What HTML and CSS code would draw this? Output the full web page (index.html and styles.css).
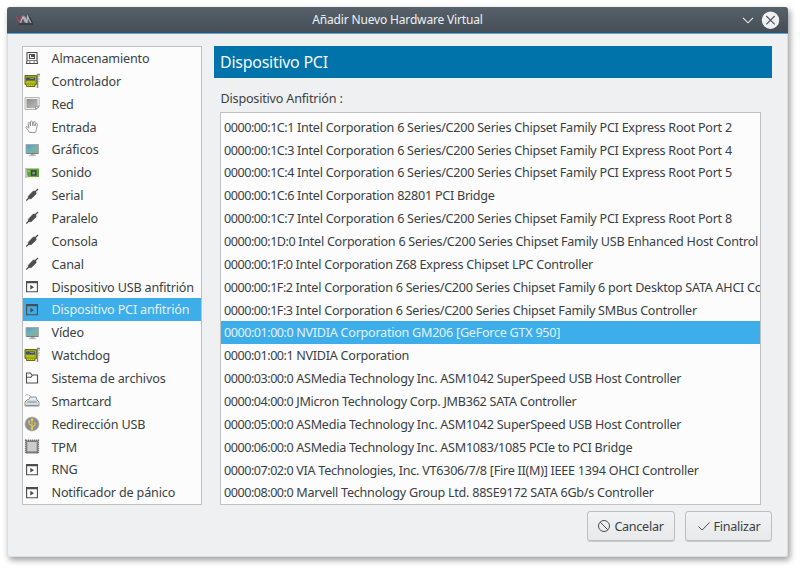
FILE: index.html
```html
<!DOCTYPE html>
<html lang="es">
<head>
<meta charset="utf-8">
<title>Añadir Nuevo Hardware Virtual</title>
<link rel="stylesheet" href="styles.css">
</head>
<body>
<svg class="defs" width="0" height="0">
<defs>
<linearGradient id="screen" x1="0" y1="0" x2="1" y2="1"><stop offset="0" stop-color="#5b93c6"/><stop offset=".5" stop-color="#6bb5b5"/><stop offset="1" stop-color="#a4a878"/></linearGradient>
<linearGradient id="grey" x1="0" y1="0" x2="1" y2="1"><stop offset="0" stop-color="#8c8d8c"/><stop offset="1" stop-color="#bcbdbb"/></linearGradient>
<symbol id="disk" viewBox="0 0 16 16"><path d="M3 2.500h10v8.200l.5 2.800h-11l.5-2.800zM5.500 4.500h5v4h-5z" fill="none" stroke="#4d4d4d" stroke-width="1.100"/><path d="M3 10.500h10" stroke="#4d4d4d" stroke-width=".7"/><path d="M7 5h3v2H7zM5 11.500h1.500v1H5zM9.500 11.500H11v1H9.500z" fill="#4d4d4d"/></symbol>
<symbol id="card" viewBox="0 0 16 16"><path d="M1 2.500h11.500v9h-1.500v2H2.500v-2H1z" fill="#9eaa10" stroke="#686f12"/><path d="M2 4.500h9v3H2z" fill="#46525a"/><path d="M6 5h4v1H6z" fill="#7197b0"/><path d="M2 9h9" stroke="#c7d32b"/><path d="M3 12.500h7" stroke="#d1cf43" stroke-dasharray="1 1"/><path d="M13.500 15V1.500H16" fill="none" stroke="#85898a" stroke-width="1.500"/><path d="M15 2v7" stroke="#adb0af" stroke-dasharray="2 1"/></symbol>
<symbol id="net" viewBox="0 0 16 16"><path d="M1 1.500h14.200v9l-3.200 3H1z" fill="#eee" stroke="#b6b7b5"/><path d="M2.500 3h11v6.500L11 12H2.500z" fill="url(#grey)"/><path d="M11.500 13.500v-3.200h3.700z" fill="#e7e7e5" stroke="#888a85" stroke-width=".8"/></symbol>
<symbol id="hand" viewBox="0 0 16 16"><path d="M5.500 13.500C4.500 11.500 3 10 2 8.800c-.5-1 .8-1.700 1.600-.8L5 9.200 4.200 4.500c-.1-1.200 1.300-1.500 1.700-.4L6.500 7V3c0-1.300 1.800-1.300 1.900 0L8.700 6.800 9.500 3c.2-1 1.800-.8 1.700.4L10.900 7l.9-2.200c.4-1 1.700-.5 1.500.5l-.9 5.200c-.2 1.500-.8 2-1 3z" fill="#fbfbfb" stroke="#858585" stroke-width=".85"/></symbol>
<symbol id="monitor" viewBox="0 0 16 16"><path d="M2 2.500h12.500v9H2z" fill="url(#screen)" stroke="#a5aaa9"/><path d="M2.500 11.500h11.700" stroke="#777e80"/><path d="M6.500 12h4v1.500h-4z" fill="#aaa"/><path d="M5 13.700h7" stroke="#a2a4a5" stroke-width=".8"/></symbol>
<symbol id="sound" viewBox="0 0 16 16"><path d="M2.500 3.500H15v8.500H3.500z" fill="#5fa23e"/><path d="M2 3v10" stroke="#8a9188"/><path d="M3.500 5h2v2h-2z" fill="#a9c85b"/><path d="M3.500 11.800h9" stroke="#b9ac3f" stroke-dasharray="1 1"/><path d="M7 5.200h5.500v5.500H7z" fill="#34413a"/><circle cx="9.700" cy="8" r="1.500" fill="#8e9894"/></symbol>
<symbol id="plug" viewBox="0 0 16 16"><path d="M2.300 13.500L14 2" stroke="#4d4d4d" stroke-width="1.200"/><path d="M4.300 9.300L9.300 4.100 11.500 4.200 12.200 6.700 7.100 11.700l-2.600-.1z" fill="#4d4d4d" stroke="#4d4d4d" stroke-width=".7"/></symbol>
<symbol id="run" viewBox="0 0 16 16"><path d="M2.600 3h10.800v9.800H2.600z" fill="none" stroke="#4d4d4d" stroke-width="1.100"/><path d="M2 2h12v2.200H2zM6.300 5.800v4.800l3.700-2.400z" fill="#4d4d4d"/></symbol>
<symbol id="folder" viewBox="0 0 16 16"><path d="M2.500 13V3h4l1.500 2h5.500v8zM2.500 7.200H7L8.500 5" fill="none" stroke="#4d4d4d" stroke-width="1.100"/></symbol>
<symbol id="smart" viewBox="0 0 16 16"><path d="M1 9l2.500-2.500h9L15 9v4H1z" fill="#d8dad9" stroke="#989c99"/><path d="M4.500 7L6 4h6l1 3" fill="#e5edf0" stroke="#8e9698"/><path d="M1.500 2.500c2-2 4 .2 6 1.500" fill="none" stroke="#999" stroke-width=".8"/><path d="M3.500 9h9" stroke="#6d95ad"/><path d="M2 12.500h12" stroke="#858a87"/></symbol>
<symbol id="usb" viewBox="0 0 16 16"><circle cx="8" cy="8" r="7" fill="#8d8d8b" stroke="#b1b1af" stroke-width=".8"/><path d="M8 13V3M8 10L5 8V5.500M8 11.200L11 9V6" stroke="#dfc74d" stroke-width="1.100" fill="none"/><path d="M6.300 4.500L8 2l1.700 2.500z" fill="#f0da60"/><circle cx="8" cy="12.500" r="1.300" fill="#e5ce52"/><circle cx="5" cy="5.500" r="1" fill="#e5ce52"/></symbol>
<symbol id="chip" viewBox="0 0 16 16"><rect x="1.700" y="1.400" width="12.600" height="12.600" fill="#999" stroke="#555" stroke-width="1.700" stroke-dasharray="1 1"/><rect x="2.800" y="2.500" width="10.400" height="10.400" rx="1" fill="#cbcccc" stroke="#777"/></symbol>
</defs>
</svg>
<div class="window">
  <header class="titlebar">
    <svg class="logo" viewBox="0 0 19 10"><path d="M1 1l3.500 6.500L6.500 1" fill="none" stroke="#a8495d" stroke-width="1.300"/><path d="M5.500 8L8 1.500l2.500 6M9.500 1.500L12 8l.500-6.500L16 8" fill="none" stroke="#b5b8ba" stroke-width="1.200"/><path d="M4 9h14M14.500 2l3 6" stroke="#252b30" stroke-width="1"/></svg>
    <span class="title">Añadir Nuevo Hardware Virtual</span>
    <svg class="controls" viewBox="0 0 40 20"><path d="M3 7.800l5 5 5-5" fill="none" stroke="#eceeef" stroke-width="1.100"/><circle cx="30.500" cy="10.200" r="8.700" fill="#eff0f1"/><path d="M26.300 6l8.400 8.400M34.700 6l-8.400 8.400" stroke="#4b555d" stroke-width="1.100"/></svg>
  </header>
  <main class="content">
    <ul class="list categories">
      <li><svg><use href="#disk"/></svg>Almacenamiento</li>
      <li><svg><use href="#card"/></svg>Controlador</li>
      <li><svg><use href="#net"/></svg>Red</li>
      <li><svg><use href="#hand"/></svg>Entrada</li>
      <li><svg><use href="#monitor"/></svg>Gráficos</li>
      <li><svg><use href="#sound"/></svg>Sonido</li>
      <li><svg><use href="#plug"/></svg>Serial</li>
      <li><svg><use href="#plug"/></svg>Paralelo</li>
      <li><svg><use href="#plug"/></svg>Consola</li>
      <li><svg><use href="#plug"/></svg>Canal</li>
      <li><svg><use href="#run"/></svg>Dispositivo USB anfitrión</li>
      <li class="selected"><svg><use href="#run"/></svg>Dispositivo PCI anfitrión</li>
      <li><svg><use href="#monitor"/></svg>Vídeo</li>
      <li><svg><use href="#card"/></svg>Watchdog</li>
      <li><svg><use href="#folder"/></svg>Sistema de archivos</li>
      <li><svg><use href="#smart"/></svg>Smartcard</li>
      <li><svg><use href="#usb"/></svg>Redirección USB</li>
      <li><svg><use href="#chip"/></svg>TPM</li>
      <li><svg><use href="#run"/></svg>RNG</li>
      <li><svg><use href="#run"/></svg>Notificador de pánico</li>
    </ul>
    <section class="panel">
      <h1>Dispositivo PCI</h1>
      <div class="label">Dispositivo Anfitrión :</div>
      <ul class="list devices">
        <li><span class="addr">0000:00:1C:1</span> Intel Corporation 6 Series/C200 Series Chipset Family PCI Express Root Port 2</li>
        <li><span class="addr">0000:00:1C:3</span> Intel Corporation 6 Series/C200 Series Chipset Family PCI Express Root Port 4</li>
        <li><span class="addr">0000:00:1C:4</span> Intel Corporation 6 Series/C200 Series Chipset Family PCI Express Root Port 5</li>
        <li><span class="addr">0000:00:1C:6</span> Intel Corporation 82801 PCI Bridge</li>
        <li><span class="addr">0000:00:1C:7</span> Intel Corporation 6 Series/C200 Series Chipset Family PCI Express Root Port 8</li>
        <li><span class="addr">0000:00:1D:0</span> Intel Corporation 6 Series/C200 Series Chipset Family USB Enhanced Host Control</li>
        <li><span class="addr">0000:00:1F:0</span> Intel Corporation Z68 Express Chipset LPC Controller</li>
        <li><span class="addr">0000:00:1F:2</span> Intel Corporation 6 Series/C200 Series Chipset Family 6 port Desktop SATA AHCI Co</li>
        <li><span class="addr">0000:00:1F:3</span> Intel Corporation 6 Series/C200 Series Chipset Family SMBus Controller</li>
        <li class="selected"><span class="addr">0000:01:00:0</span> NVIDIA Corporation GM206 [GeForce GTX 950]</li>
        <li><span class="addr">0000:01:00:1</span> NVIDIA Corporation</li>
        <li><span class="addr">0000:03:00:0</span> ASMedia Technology Inc. ASM1042 SuperSpeed USB Host Controller</li>
        <li><span class="addr">0000:04:00:0</span> JMicron Technology Corp. JMB362 SATA Controller</li>
        <li><span class="addr">0000:05:00:0</span> ASMedia Technology Inc. ASM1042 SuperSpeed USB Host Controller</li>
        <li><span class="addr">0000:06:00:0</span> ASMedia Technology Inc. ASM1083/1085 PCIe to PCI Bridge</li>
        <li><span class="addr">0000:07:02:0</span> VIA Technologies, Inc. VT6306/7/8 [Fire II(M)] IEEE 1394 OHCI Controller</li>
        <li><span class="addr">0000:08:00:0</span> Marvell Technology Group Ltd. 88SE9172 SATA 6Gb/s Controller</li>
      </ul>
    </section>
  </main>
  <footer class="actions">
    <button class="cancel"><svg viewBox="0 0 14 14"><circle cx="7" cy="7" r="5.500"/><path d="M3.100 3.100l7.800 7.800"/></svg>Cancelar</button>
    <button><svg viewBox="0 0 14 14"><path d="M1.500 7.500l3.600 3.600L12.500 3.500"/></svg>Finalizar</button>
  </footer>
</div>
</body>
</html>
```
FILE: styles.css
```css
* { box-sizing: border-box; }
body {
  margin: 0;
  padding: 7px;
  height: 569px;
  overflow: hidden;
  background: #fff;
  color: #3a3f44;
  font: 12.6px/24px "Noto Sans", sans-serif;
}
.defs { position: absolute; }
.window {
  width: 781px;
  height: 550px;
  background: #eff0f1;
  border-radius: 3px;
  box-shadow: 2px 3px 6px rgba(0, 0, 0, .4), inset 0 0 0 1px #dcddde;
}
.titlebar {
  display: flex;
  align-items: center;
  height: 27px;
  padding: 0 8px 0 8px;
  color: #eff0f1;
  background: linear-gradient(#56616a, #454e56);
  border-bottom: 1px solid #4ba9df;
  border-radius: 3px 3px 0 0;
}
.logo { width: 19px; height: 10px; }
.title { flex: 1; text-align: center; padding-left: 21px; font-size: 12px; letter-spacing: -.16px; }
.controls { width: 40px; height: 20px; }
.content { display: flex; gap: 12px; padding: 12px 16px 0 15px; }
.list {
  list-style: none;
  margin: 0;
  padding: 0;
  background: #fcfcfc;
  border: 1px solid #bfc1c2;
  overflow: hidden;
}
.list li { height: 22.87px; line-height: 24.4px; white-space: nowrap; }
.list .selected { background: #3daee9; color: #e3f1fa; }
.categories { width: 180px; height: 459px; letter-spacing: -.17px; }
.categories li { display: flex; align-items: flex-start; gap: 11.5px; padding-left: 1px; }
.categories svg { width: 16px; height: 16px; flex: none; margin-top: 3.3px; }
.panel { width: 558px; }
h1 {
  margin: 0;
  height: 32px;
  padding-left: 6px;
  font-size: 16px;
  font-weight: 400;
  letter-spacing: -.27px;
  line-height: 32px;
  color: #f4f8fa;
  background: #0073aa;
}
.label { height: 34px; padding: 9px 0 0 6.5px; letter-spacing: -.2px; }
.devices { width: 541px; height: 393px; margin-left: 6px; padding-top: 2.7px; letter-spacing: -.26px; }
.devices li { padding-left: 3px; }
.addr { letter-spacing: -.48px; }
.actions { display: flex; justify-content: flex-end; gap: 10.5px; padding: 6px 16px 0 0; }
button {
  display: flex;
  align-items: center;
  justify-content: center;
  gap: 3px;
  width: 87px;
  height: 30px;
  padding: 0;
  color: #3a3f44;
  font: 12.6px "Noto Sans", sans-serif;
  letter-spacing: -.28px;
  background: linear-gradient(#f1f2f3, #e8e9ea);
  border: 1px solid #bcbebf;
  border-radius: 3px;
  box-shadow: 0 1px 0 #c8cacb;
}
.cancel { width: 88px; }
button svg { width: 14px; height: 14px; fill: none; stroke: #4d4d4d; stroke-width: 1; }
```
